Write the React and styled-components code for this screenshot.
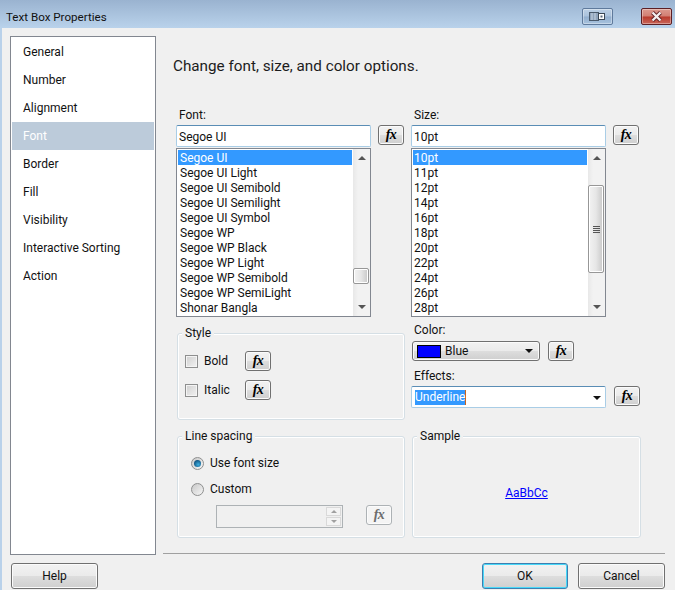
import React from "react";
import styled, { createGlobalStyle } from "styled-components";

const GlobalStyle = createGlobalStyle`
  html, body {
    margin: 0;
    padding: 0;
    background: #f0f0f0;
    overflow: hidden;
  }
  * {
    box-sizing: border-box;
  }
`;

const Window = styled.div`
  width: 675px;
  height: 590px;
  display: flex;
  flex-direction: column;
  overflow: hidden;
  font-family: Roboto, "Noto Sans", sans-serif;
  font-size: 12px;
  color: #111;
  background: #f0f0f0;
`;

const TitleBar = styled.div`
  height: 28px;
  flex: none;
  display: flex;
  align-items: flex-start;
  padding: 8px 3px 0 6px;
  background: linear-gradient(#9ab3d0, #b9d2eb);
`;

const Title = styled.div`
  flex: 1;
  line-height: 19px;
  font-size: 11.6px;
`;

const CaptionButton = styled.div`
  width: 31px;
  height: 17px;
  display: flex;
  align-items: center;
  justify-content: center;
  border-radius: 2px;
  border: 1px solid ${p => (p.$close ? "#5c1f24" : "#5f7a9c")};
  margin-left: ${p => (p.$close ? "28px" : "0")};
  box-shadow: inset 0 0 0 1px rgba(255, 255, 255, 0.35);
  background: ${p =>
    p.$close
      ? "linear-gradient(#dc9a8f 0, #d27e72 48%, #b93a2c 52%, #c9665a 100%)"
      : "linear-gradient(#bdd0e5 0, #aac2dc 48%, #92aece 52%, #a8c3de 100%)"};
`;

const Body = styled.div`
  flex: 1;
  display: flex;
  flex-direction: column;
  padding: 8px 10px 0 8px;
  border-left: 2px solid #b9d1ea;
  min-height: 0;
`;

const Upper = styled.div`
  display: flex;
  height: 519px;
  flex: none;
`;

const Sidebar = styled.div`
  width: 146px;
  flex: none;
  padding: 1px;
  background: #fff;
  border: 1px solid #828790;
`;

const NavItem = styled.div`
  height: 28px;
  line-height: 28px;
  padding-left: 11px;
  background: ${p => (p.$active ? "#bccbda" : "transparent")};
  color: ${p => (p.$active ? "#fff" : "#111")};
`;

const Main = styled.div`
  flex: 1;
  display: flex;
  flex-direction: column;
  margin-left: 7px;
  min-width: 0;
`;

const Heading = styled.div`
  font-size: 15.25px;
  line-height: 20px;
  margin: 20px 0 0 10px;
  color: #1c1c1c;
`;

const Form = styled.div`
  display: flex;
  gap: 6px;
  margin: 31px 0 0 13px;
`;

const Column = styled.div`
  width: ${p => p.$width}px;
  flex: none;
  display: flex;
  flex-direction: column;
`;

const FieldLabel = styled.div`
  height: ${p => p.$height || 18}px;
  line-height: 16px;
  padding-left: 3px;
  margin-top: ${p => p.$top || 0}px;
`;

const FieldRow = styled.div`
  display: flex;
  align-items: flex-start;
  gap: ${p => p.$gap || 7}px;
`;

const TextInput = styled.div`
  width: 195px;
  height: 22px;
  display: flex;
  align-items: center;
  justify-content: space-between;
  padding: 1px 4px 0 2px;
  line-height: 20px;
  background: #fff;
  border: 1px solid #a9cde6;
  border-top-color: #5a8db5;
  border-radius: 2px;
`;

const Fx = styled.div`
  width: 26px;
  height: 20px;
  flex: none;
  display: flex;
  align-items: center;
  justify-content: center;
  font-family: "Liberation Serif", serif;
  font-style: italic;
  font-weight: 700;
  font-size: 14px;
  letter-spacing: -0.5px;
  border-radius: 3px;
  border: 1px solid ${p => (p.$disabled ? "#adb2b5" : "#707070")};
  color: ${p => (p.$disabled ? "#6d6d6d" : "#000")};
  box-shadow: inset 0 0 0 1px #fbfbfb;
  background: ${p =>
    p.$disabled
      ? "#f4f4f4"
      : "linear-gradient(#f2f2f2 0, #ebebeb 48%, #dddddd 52%, #cfcfcf 100%)"};
`;

const ListBox = styled.div`
  width: 195px;
  height: 169px;
  margin-top: 1px;
  display: flex;
  padding: 1px 0 1px 1px;
  background: #fff;
  border: 1px solid #828790;
`;

const Options = styled.div`
  width: 174px;
  flex: none;
`;

const Option = styled.div`
  height: 15px;
  line-height: 17px;
  padding-left: ${p => p.$pad}px;
  white-space: nowrap;
  background: ${p => (p.$selected ? "#3399ff" : "transparent")};
  color: ${p => (p.$selected ? "#fff" : "#111")};
`;

const ScrollTrack = styled.div`
  width: 17px;
  margin: -1px 0 -1px 1px;
  display: flex;
  flex-direction: column;
  align-items: center;
  background: linear-gradient(90deg, #e8e8e8, #f2f2f2 30%, #f2f2f2);
`;

const ScrollArrow = styled.div`
  flex: none;
  height: 18px;
  width: 100%;
  display: flex;
  align-items: center;
  justify-content: center;
  &::before {
    content: "";
    border-left: 4px solid transparent;
    border-right: 4px solid transparent;
    border-${p => (p.$down ? "top" : "bottom")}: 4px solid #555;
  }
`;

const ScrollGap = styled.div`
  flex: 1;
  width: 100%;
  padding: ${p => p.$top}px 1px 0 0;
`;

const Thumb = styled.div`
  height: ${p => p.$height}px;
  display: flex;
  flex-direction: column;
  align-items: center;
  justify-content: center;
  gap: 1px;
  border: 1px solid #979797;
  border-radius: 2px;
  box-shadow: inset 0 0 0 1px #fff;
  background: linear-gradient(90deg, #f2f2f2, #e6e6e6 50%, #c8c8c8);
`;

const GripLine = styled.div`
  width: 7px;
  height: 1px;
  background: #555;
`;

const Group = styled.div`
  position: relative;
  height: ${p => p.$height}px;
  margin-top: ${p => p.$top}px;
  margin-left: 1px;
  padding: ${p => p.$padding};
  display: flex;
  flex-direction: column;
  border: 1px solid #d5dfe5;
  border-radius: 3px;
  box-shadow: inset 0 0 0 1px #fff;
`;

const Legend = styled.div`
  position: absolute;
  top: -9px;
  left: 4px;
  padding: 0 3px;
  line-height: 16px;
  background: #f0f0f0;
`;

const CheckRow = styled.div`
  display: flex;
  align-items: center;
  height: 20px;
  margin-bottom: 9px;
`;

const CheckBox = styled.div`
  width: 13px;
  height: 13px;
  flex: none;
  border: 1px solid #8e8f8f;
  box-shadow: inset 0 0 0 1px #f4f4f4;
  background: linear-gradient(135deg, #cfcfcf, #f2f2f2);
`;

const CheckLabel = styled.div`
  width: 47px;
  padding-left: 6px;
  flex: none;
`;

const RadioRow = styled.div`
  display: flex;
  align-items: center;
  height: 16px;
  margin-bottom: 10px;
`;

const Radio = styled.div`
  width: 13px;
  height: 13px;
  flex: none;
  display: flex;
  align-items: center;
  justify-content: center;
  border-radius: 50%;
  border: 1px solid #8e8f8f;
  background: linear-gradient(135deg, #c8c8c8, #f6f6f6);
  &::after {
    content: "";
    display: ${p => (p.$checked ? "block" : "none")};
    width: 7px;
    height: 7px;
    border-radius: 50%;
    background: radial-gradient(circle at 60% 65%, #3fb0e0, #0d4f7d 75%);
  }
`;

const RadioLabel = styled.div`
  padding-left: 6px;
`;

const SpinRow = styled.div`
  display: flex;
  align-items: flex-start;
  margin: -2px 0 0 25px;
`;

const SpinField = styled.div`
  width: 127px;
  height: 23px;
  flex: none;
  display: flex;
  justify-content: flex-end;
  padding: 1px;
  border: 1px solid #adb2b5;
  background: #f0f0f0;
`;

const SpinButtons = styled.div`
  width: 15px;
  display: flex;
  flex-direction: column;
  gap: 1px;
`;

const SpinButton = styled.div`
  flex: 1;
  display: flex;
  align-items: center;
  justify-content: center;
  border: 1px solid #d9d9d9;
  background: #f4f4f4;
  &::before {
    content: "";
    border-left: 3px solid transparent;
    border-right: 3px solid transparent;
    border-${p => (p.$down ? "top" : "bottom")}: 3px solid #a0a0a0;
  }
`;

const SpinFx = styled.div`
  margin-left: 23px;
`;

const ComboButton = styled.div`
  width: 128px;
  height: 20px;
  margin-left: 1px;
  display: flex;
  align-items: center;
  padding: 0 6px 0 4px;
  border: 1px solid #707070;
  border-radius: 3px;
  box-shadow: inset 0 0 0 1px #fbfbfb;
  background: linear-gradient(#f2f2f2 0, #ebebeb 48%, #dddddd 52%, #cfcfcf 100%);
`;

const Swatch = styled.div`
  width: 24px;
  height: 13px;
  flex: none;
  background: #0000ff;
  border: 1px solid #000;
`;

const ComboText = styled.div`
  flex: 1;
  padding-left: 4px;
`;

const DropArrow = styled.div`
  flex: none;
  border-left: 4px solid transparent;
  border-right: 4px solid transparent;
  border-top: 4px solid #111;
`;

const SelectedText = styled.span`
  margin-left: 1px;
  background: #3399ff;
  color: #fff;
  line-height: 15px;
  border-right: 1px solid #c8641e;
`;

const SampleText = styled.div`
  margin: auto;
  color: #0000ff;
  text-decoration: underline;
`;

const Separator = styled.div`
  height: 1px;
  margin-top: auto;
  margin-bottom: 1px;
  background: #a0a0a0;
`;

const Footer = styled.div`
  display: flex;
  align-items: flex-start;
  margin-top: 8px;
  padding-left: 1px;
  gap: 10px;
`;

const Button = styled.div`
  width: ${p => p.$width || 87}px;
  height: 26px;
  flex: none;
  display: flex;
  align-items: center;
  justify-content: center;
  margin-left: ${p => (p.$push ? "auto" : "0")};
  border-radius: 3px;
  border: 1px solid ${p => (p.$primary ? "#3c7fb1" : "#707070")};
  box-shadow: inset 0 0 0 1px ${p => (p.$primary ? "#48d8f8" : "#fbfbfb")};
  background: linear-gradient(#f2f2f2 0, #ebebeb 48%, #dddddd 52%, #cfcfcf 100%);
`;

const navItems = [
  "General",
  "Number",
  "Alignment",
  "Font",
  "Border",
  "Fill",
  "Visibility",
  "Interactive Sorting",
  "Action",
];

const fonts = [
  "Segoe UI",
  "Segoe UI Light",
  "Segoe UI Semibold",
  "Segoe UI Semilight",
  "Segoe UI Symbol",
  "Segoe WP",
  "Segoe WP Black",
  "Segoe WP Light",
  "Segoe WP Semibold",
  "Segoe WP SemiLight",
  "Shonar Bangla",
];

const sizes = ["10pt", "11pt", "12pt", "14pt", "16pt", "18pt", "20pt", "22pt", "24pt", "26pt", "28pt"];

const FontList = ({ items, pad, thumbTop, thumbHeight, grip }) => (
  <ListBox>
    <Options>
      {items.map((item, i) => (
        <Option key={item} $pad={pad} $selected={i === 0}>
          {item}
        </Option>
      ))}
    </Options>
    <ScrollTrack>
      <ScrollArrow />
      <ScrollGap $top={thumbTop}>
        <Thumb $height={thumbHeight}>
          {grip && (
            <>
              <GripLine />
              <GripLine />
              <GripLine />
              <GripLine />
            </>
          )}
        </Thumb>
      </ScrollGap>
      <ScrollArrow $down />
    </ScrollTrack>
  </ListBox>
);

export default function App() {
  return (
    <Window>
      <GlobalStyle />
      <TitleBar>
        <Title>Text Box Properties</Title>
        <CaptionButton>
          <svg width="17" height="11" viewBox="0 0 17 11">
            <rect x="0.5" y="1.5" width="9" height="8" fill="#8fa3bb" stroke="#4a5a6c" />
            <path d="M3 2v7M6 2v7" stroke="#c8d4e2" />
            <rect x="9.5" y="2.5" width="6" height="6" fill="#fff" stroke="#3a4654" />
            <rect x="11.5" y="4.5" width="2" height="2" fill="#5a6a7c" />
          </svg>
        </CaptionButton>
        <CaptionButton $close>
          <svg width="13" height="11" viewBox="0 0 13 11">
            <path d="M2.5 1.5 L10.5 9.5 M10.5 1.5 L2.5 9.5" stroke="#5c1f24" strokeWidth="4" />
            <path d="M2.5 1.5 L10.5 9.5 M10.5 1.5 L2.5 9.5" stroke="#f4eeee" strokeWidth="2.4" />
          </svg>
        </CaptionButton>
      </TitleBar>
      <Body>
        <Upper>
          <Sidebar>
            {navItems.map(item => (
              <NavItem key={item} $active={item === "Font"}>
                {item}
              </NavItem>
            ))}
          </Sidebar>
          <Main>
            <Heading>Change font, size, and color options.</Heading>
            <Form>
              <Column $width={229}>
                <FieldLabel>Font:</FieldLabel>
                <FieldRow>
                  <TextInput>Segoe UI</TextInput>
                  <Fx>fx</Fx>
                </FieldRow>
                <FontList items={fonts} pad={2} thumbTop={101} thumbHeight={16} />
                <Group $height={87} $top={16} $padding="17px 0 0 7px">
                  <Legend>Style</Legend>
                  <CheckRow>
                    <CheckBox />
                    <CheckLabel>Bold</CheckLabel>
                    <Fx>fx</Fx>
                  </CheckRow>
                  <CheckRow>
                    <CheckBox />
                    <CheckLabel>Italic</CheckLabel>
                    <Fx>fx</Fx>
                  </CheckRow>
                </Group>
                <Group $height={102} $top={16} $padding="18px 0 0 13px">
                  <Legend>Line spacing</Legend>
                  <RadioRow>
                    <Radio $checked />
                    <RadioLabel>Use font size</RadioLabel>
                  </RadioRow>
                  <RadioRow>
                    <Radio />
                    <RadioLabel>Custom</RadioLabel>
                  </RadioRow>
                  <SpinRow>
                    <SpinField>
                      <SpinButtons>
                        <SpinButton />
                        <SpinButton $down />
                      </SpinButtons>
                    </SpinField>
                    <SpinFx>
                      <Fx $disabled>fx</Fx>
                    </SpinFx>
                  </SpinRow>
                </Group>
              </Column>
              <Column $width={230}>
                <FieldLabel>Size:</FieldLabel>
                <FieldRow>
                  <TextInput>10pt</TextInput>
                  <Fx>fx</Fx>
                </FieldRow>
                <FontList items={sizes} pad={1} thumbTop={18} thumbHeight={88} grip />
                <FieldLabel $top={5} $height={19}>Color:</FieldLabel>
                <FieldRow $gap={8}>
                  <ComboButton>
                    <Swatch />
                    <ComboText>Blue</ComboText>
                    <DropArrow />
                  </ComboButton>
                  <Fx>fx</Fx>
                </FieldRow>
                <FieldLabel $top={7} $height={18}>Effects:</FieldLabel>
                <FieldRow $gap={8}>
                  <TextInput>
                    <SelectedText>Underline</SelectedText>
                    <DropArrow />
                  </TextInput>
                  <Fx>fx</Fx>
                </FieldRow>
                <Group $height={102} $top={28} $padding="12px 0 0">
                  <Legend>Sample</Legend>
                  <SampleText>AaBbCc</SampleText>
                </Group>
              </Column>
            </Form>
            <Separator />
          </Main>
        </Upper>
        <Footer>
          <Button>Help</Button>
          <Button $primary $push $width={86}>OK</Button>
          <Button>Cancel</Button>
        </Footer>
      </Body>
    </Window>
  );
}
